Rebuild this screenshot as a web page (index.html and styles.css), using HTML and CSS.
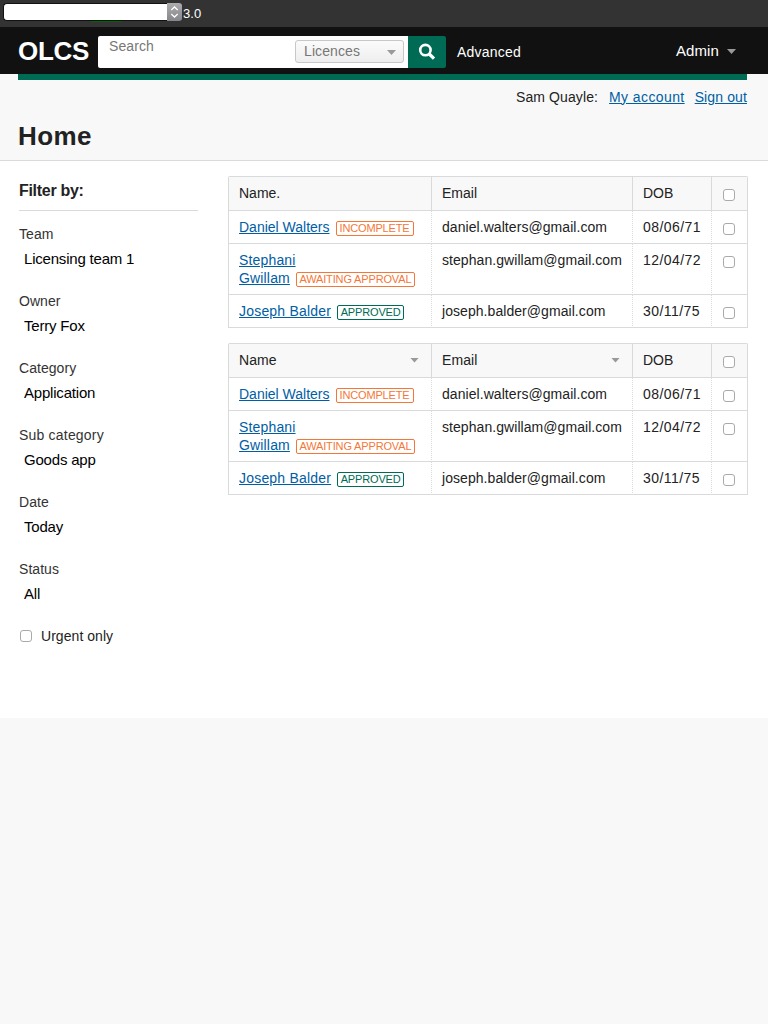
FILE: index.html
```
<!DOCTYPE html>
<html lang="en">
<head>
<meta charset="utf-8">
<title>OLCS - Home</title>
<link rel="stylesheet" href="styles.css">
</head>
<body>
<div class="topbar">
  <div class="version-select"><span class="stepper"><svg width="15" height="18" viewBox="0 0 15 18" fill="none" stroke="#fff" stroke-width="1.3"><path d="M4.3 7 7.5 4l3.2 3M4.3 11l3.2 3 3.2-3"/></svg></span></div>
  <span class="version">3.0</span>
</div>
<header class="header">
  <div class="logo">OLCS</div>
  <div class="search">
    <span class="search-text">Search</span>
    <div class="search-type"><span>Licences</span><i class="arrow"></i></div>
  </div>
  <div class="search-button"><svg width="18" height="18" viewBox="0 0 18 18" fill="none" stroke="#fff"><circle cx="7.4" cy="7.1" r="5.2" stroke-width="2.6"/><path d="M11 10.8l5 4.8" stroke-width="3.3"/></svg></div>
  <span class="advanced">Advanced</span>
  <div class="admin"><span>Admin</span><i class="arrow"></i></div>
</header>
<div class="title-area">
  <div class="account"><span class="user">Sam Quayle:</span><a class="my-account" href="#">My account</a><a class="sign-out" href="#">Sign out</a></div>
  <h1>Home</h1>
</div>
<main class="main">
  <aside class="filters">
    <h2>Filter by:</h2>
    <div class="field"><div class="label">Team</div><div class="value">Licensing team 1</div></div>
    <div class="field"><div class="label">Owner</div><div class="value">Terry Fox</div></div>
    <div class="field"><div class="label">Category</div><div class="value">Application</div></div>
    <div class="field"><div class="label wide">Sub category</div><div class="value">Goods app</div></div>
    <div class="field"><div class="label">Date</div><div class="value">Today</div></div>
    <div class="field"><div class="label">Status</div><div class="value">All</div></div>
    <div class="urgent"><span class="check"></span><span>Urgent only</span></div>
  </aside>
  <section class="tables">
    <table>
      <colgroup><col class="c1"><col class="c2"><col class="c3"><col class="c4"></colgroup>
      <thead><tr><th>Name.</th><th>Email</th><th>DOB</th><th><span class="check"></span></th></tr></thead>
      <tbody>
        <tr><td><a href="#">Daniel Walters</a><span class="tag incomplete">INCOMPLETE</span></td><td class="email">daniel.walters@gmail.com</td><td class="dob">08/06/71</td><td><span class="check"></span></td></tr>
        <tr><td><a class="stephani" href="#">Stephani</a> <span class="keep"><a class="stephani" href="#">Gwillam</a><span class="tag awaiting">AWAITING APPROVAL</span></span></td><td class="email">stephan.gwillam@gmail.com</td><td class="dob">12/04/72</td><td><span class="check"></span></td></tr>
        <tr><td><a class="joseph" href="#">Joseph Balder</a><span class="tag approved">APPROVED</span></td><td class="email">joseph.balder@gmail.com</td><td class="dob">30/11/75</td><td><span class="check"></span></td></tr>
      </tbody>
    </table>
    <table>
      <colgroup><col class="c1"><col class="c2"><col class="c3"><col class="c4"></colgroup>
      <thead><tr><th><div class="sort"><span>Name</span><i class="arrow"></i></div></th><th><div class="sort"><span>Email</span><i class="arrow"></i></div></th><th>DOB</th><th><span class="check"></span></th></tr></thead>
      <tbody>
        <tr><td><a href="#">Daniel Walters</a><span class="tag incomplete">INCOMPLETE</span></td><td class="email">daniel.walters@gmail.com</td><td class="dob">08/06/71</td><td><span class="check"></span></td></tr>
        <tr><td><a class="stephani" href="#">Stephani</a> <span class="keep"><a class="stephani" href="#">Gwillam</a><span class="tag awaiting">AWAITING APPROVAL</span></span></td><td class="email">stephan.gwillam@gmail.com</td><td class="dob">12/04/72</td><td><span class="check"></span></td></tr>
        <tr><td><a class="joseph" href="#">Joseph Balder</a><span class="tag approved">APPROVED</span></td><td class="email">joseph.balder@gmail.com</td><td class="dob">30/11/75</td><td><span class="check"></span></td></tr>
      </tbody>
    </table>
  </section>
</main>
</body>
</html>
```
FILE: styles.css
```
* { box-sizing: border-box; }
body { margin: 0; background: #f8f8f8; color: #222; font: 14px/18px "Liberation Sans", Arial, sans-serif; }
a { color: #005ea5; text-decoration: underline; text-decoration-thickness: 1px; text-underline-offset: 1px; }
.arrow { width: 9px; height: 5px; background: #999; clip-path: polygon(0 0, 100% 0, 50% 100%); flex: none; }

.topbar { height: 27px; background: #333; display: flex; padding: 3px 0 0 3px; }
.version-select { position: relative; width: 179px; height: 18px; background: #fff; border: 1px solid #111; border-width: 1px 0 1px 1px; border-radius: 4px; display: flex; justify-content: flex-end; }
.version-select::after { content: ""; position: absolute; left: 87px; bottom: -2px; width: 31px; height: 1px; background: #006400; }
.stepper { width: 15px; height: 18px; margin-top: -1px; background: linear-gradient(#adadb0, #86868a); border-radius: 0 3px 3px 0; }
.stepper svg { display: block; }
.version { color: #fff; font-size: 13px; line-height: 21px; margin-left: 1px; letter-spacing: .1px; }

.header { height: 47px; background: #111; color: #fff; display: flex; padding: 9px 32px 0 18px; }
.logo { width: 80px; font-size: 26px; font-weight: bold; line-height: 31px; letter-spacing: -.3px; }
.search { width: 310px; height: 32px; background: #fff; border-radius: 2px 0 0 2px; display: flex; justify-content: space-between; padding: 4px 4px 5px 11px; color: #777; }
.search-text { line-height: 12px; letter-spacing: .1px; }
.search-type { width: 109px; height: 23px; border: 1px solid #c8c8c8; border-radius: 3px; background: linear-gradient(#fbfbfb, #eee); display: flex; justify-content: space-between; align-items: center; padding: 0 7px 2px 8px; letter-spacing: .1px; }
.search-type .arrow { margin-top: 4px; }
.search-button { width: 38px; height: 32px; background: #006b54; border-radius: 0 2px 2px 0; display: flex; align-items: center; justify-content: center; }
.advanced { margin-left: 11px; line-height: 33px; letter-spacing: .2px; }
.admin { margin-left: auto; height: 31px; display: flex; align-items: center; font-size: 15px; letter-spacing: .1px; gap: 8px; }
.admin span { margin-top: -2px; }

.title-area { height: 87px; margin: 0; padding: 0 21px 0 18px; border-bottom: 1px solid #d9dadc; }
.account { border-top: 6px solid #006b54; padding-top: 8px; height: 47px; display: flex; justify-content: flex-end; }
.user { letter-spacing: .1px; }
.my-account { margin-left: 11px; letter-spacing: .4px; }
.sign-out { margin-left: 10px; letter-spacing: .12px; }
h1 { margin: 0; font-size: 26px; line-height: 31px; letter-spacing: .4px; }

.main { height: 557px; background: #fff; display: flex; padding: 15px 20px 0 19px; }
.filters { width: 179px; margin-right: 30px; flex: none; }
h2 { margin: 0 0 14px; height: 35px; border-bottom: 1px solid #d9dadc; font-size: 16px; line-height: 29px; letter-spacing: -.3px; }
.field { height: 67px; }
.label { line-height: 18px; color: #333; letter-spacing: .05px; }
.wide { letter-spacing: .2px; }
.value { padding: 7px 0 0 5px; line-height: 18px; font-size: 15px; letter-spacing: -.2px; color: #000; }
.urgent { display: flex; align-items: center; height: 18px; gap: 9px; padding-left: 1px; letter-spacing: .05px; }
.check { display: block; width: 12px; height: 12px; background: #fff; border: 1px solid #aaa; border-radius: 3px; flex: none; }

.tables { width: 520px; display: flex; flex-direction: column; gap: 15px; }
table { width: 520px; table-layout: fixed; border-collapse: separate; border-spacing: 0; border: 1px solid #d9dadc; border-bottom: 0; border-radius: 2px 2px 0 0; }
.c1 { width: 203px; }
.c2 { width: 201px; }
.c3 { width: 79px; }
.c4 { width: 35px; }
th, td { padding: 7px 0 7px 10px; vertical-align: top; text-align: left; font-weight: normal; border-bottom: 1px solid #d9dadc; }
th { background: #f8f8f8; border-right: 1px solid #d9dadc; padding-bottom: 8px; }
td { height: 33px; border-right: 1px dotted #d9dadc; }
th:last-child, td:last-child { border-right: 0; padding-left: 11px; }
th .check, td .check { margin-top: 5px; }
.email { letter-spacing: .06px; }
.dob { letter-spacing: .45px; }
.joseph { letter-spacing: .2px; }
.stephani { letter-spacing: .16px; }
.keep { white-space: nowrap; }
.sort { display: flex; justify-content: space-between; align-items: center; padding-right: 12px; }
.sort span { letter-spacing: .1px; }
.tag { display: inline-block; height: 15px; margin: 0 0 -1px 6px; border: 1px solid; border-radius: 2px; font-size: 11px; line-height: 13px; text-align: center; white-space: nowrap; vertical-align: 0; letter-spacing: -.15px; }
.incomplete { width: 78px; color: #f47738; }
.awaiting { width: 119px; color: #f47738; }
.approved { width: 67px; color: #006b54; }
```
